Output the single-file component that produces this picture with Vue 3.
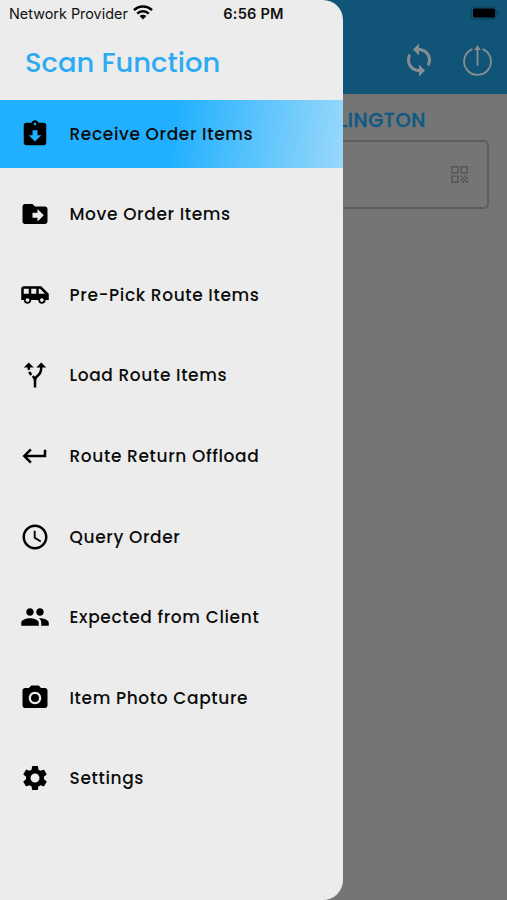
<script setup>
import {ref} from "vue";

/**
 * Entries of the scan function menu.
 *
 * label - text of the entry
 * icon  - path data on a 24x24 grid
 */
const menuItems = [
    {
        label: "Receive Order Items",
        icon: "M19 3h-4.18C14.4 1.84 13.3 1 12 1s-2.4.84-2.82 2H5c-1.1 0-2 .9-2 2v14c0 1.1.9 2 2 2h14c1.1 0 2-.9 2-2V5c0-1.1-.9-2-2-2zm-7 0c.55 0 1 .45 1 1s-.45 1-1 1-1-.45-1-1 .45-1 1-1zm0 15l-5-5h3V9h4v4h3l-5 5z"
    },
    {
        label: "Move Order Items",
        icon: "M20 6h-8l-2-2H4c-1.1 0-2 .9-2 2v12c0 1.1.9 2 2 2h16c1.1 0 2-.9 2-2V8c0-1.1-.9-2-2-2zm-6 12v-3h-4v-4h4V8l5 5-5 5z"
    },
    {
        label: "Pre-Pick Route Items",
        icon: "M17 5H3c-1.1 0-2 .89-2 2v9h2c0 1.65 1.34 3 3 3s3-1.35 3-3h5.5c0 1.65 1.34 3 3 3s3-1.35 3-3H23v-5l-6-6zM3 11V7h4v4H3zm3 6.5c-.83 0-1.5-.67-1.5-1.5s.67-1.5 1.5-1.5 1.5.67 1.5 1.5-.67 1.5-1.5 1.5zm7-6.5H9V7h4v4zm4.5 6.5c-.83 0-1.5-.67-1.5-1.5s.67-1.5 1.5-1.5 1.5.67 1.5 1.5-.67 1.5-1.5 1.5zM15 11V7h1l4 4h-5z"
    },
    {
        label: "Load Route Items",
        icon: "M9.78 11.16l-1.42 1.42c-.68-.69-1.34-1.58-1.79-2.94l1.94-.49c.32.89.77 1.5 1.27 2.01zM11 6L7 2 3 6h3.02c.02.81.08 1.54.19 2.17l1.94-.49C8.08 7.2 8.03 6.63 8.02 6H11zm10 0l-4-4-4 4h2.99c-.1 3.68-1.28 4.75-2.54 5.88-.5.44-1.01.92-1.45 1.55-.34-.49-.73-.88-1.13-1.24L9.46 13.6c.93.85 1.54 1.54 1.54 3.4v5h2v-5c0-2.02.71-2.66 1.79-3.63 1.38-1.24 3.08-2.78 3.2-7.37H21z"
    },
    {
        label: "Route Return Offload",
        icon: "M19 7v4H5.83l3.58-3.59L8 6l-6 6 6 6 1.41-1.41L5.83 13H21V7z"
    },
    {
        label: "Query Order",
        icon: "M11.99 2C6.47 2 2 6.48 2 12s4.47 10 9.99 10C17.52 22 22 17.52 22 12S17.52 2 11.99 2zM12 20c-4.42 0-8-3.58-8-8s3.58-8 8-8 8 3.58 8 8-3.58 8-8 8zM12.5 7H11v6l5.25 3.15.75-1.23-4.5-2.67z"
    },
    {
        label: "Expected from Client",
        icon: "M16 11c1.66 0 2.99-1.34 2.99-3S17.66 5 16 5c-1.66 0-3 1.34-3 3s1.34 3 3 3zm-8 0c1.66 0 2.99-1.34 2.99-3S9.66 5 8 5C6.34 5 5 6.34 5 8s1.34 3 3 3zm0 2c-2.33 0-7 1.17-7 3.5V19h14v-2.5c0-2.33-4.67-3.5-7-3.5zm8 0c-.29 0-.62.02-.97.05 1.16.84 1.97 1.97 1.97 3.45V19h6v-2.5c0-2.33-4.67-3.5-7-3.5z"
    },
    {
        label: "Item Photo Capture",
        icon: "M12 8.8a3.2 3.2 0 1 0 0 6.4 3.2 3.2 0 0 0 0-6.4zM9 2L7.17 4H4c-1.1 0-2 .9-2 2v12c0 1.1.9 2 2 2h16c1.1 0 2-.9 2-2V6c0-1.1-.9-2-2-2h-3.17L15 2H9zm3 15c-2.76 0-5-2.24-5-5s2.24-5 5-5 5 2.24 5 5-2.24 5-5 5z"
    },
    {
        label: "Settings",
        icon: "M19.14 12.94c.04-.3.06-.61.06-.94 0-.32-.02-.64-.07-.94l2.03-1.58c.18-.14.23-.41.12-.61l-1.92-3.32c-.12-.22-.37-.29-.59-.22l-2.39.96c-.5-.38-1.03-.7-1.62-.94L14.4 2.81c-.04-.24-.24-.41-.48-.41h-3.84c-.24 0-.43.17-.47.41L9.25 5.35c-.59.24-1.13.57-1.62.94L5.24 5.33c-.22-.08-.47 0-.59.22L2.74 8.87c-.12.21-.08.47.12.61l2.03 1.58c-.05.3-.09.63-.09.94s.02.64.07.94l-2.03 1.58c-.18.14-.23.41-.12.61l1.92 3.32c.12.22.37.29.59.22l2.39-.96c.5.38 1.03.7 1.62.94l.36 2.54c.05.24.24.41.48.41h3.84c.24 0 .44-.17.47-.41l.36-2.54c.59-.24 1.13-.56 1.62-.94l2.39.96c.22.08.47 0 .59-.22l1.92-3.32c.12-.22.07-.47-.12-.61l-2.01-1.58zM12 15.6c-1.98 0-3.6-1.62-3.6-3.6s1.62-3.6 3.6-3.6 3.6 1.62 3.6 3.6-1.62 3.6-3.6 3.6z"
    }
];

/** Index of the highlighted menu entry. */
const selected = ref(0);
</script>

<template>
    <div class="screen">
        <!-- Dimmed page behind the drawer -->
        <div class="page">
            <header class="toolbar">
                <svg class="sync" viewBox="0 0 24 24">
                    <path d="M12 4V1L8 5l4 4V6c3.31 0 6 2.69 6 6 0 1.01-.25 1.97-.7 2.8l1.46 1.46C19.54 15.03 20 13.57 20 12c0-4.42-3.58-8-8-8zm0 14c-3.31 0-6-2.69-6-6 0-1.01.25-1.97.7-2.8L5.24 7.74C4.46 8.97 4 10.43 4 12c0 4.42 3.58 8 8 8v3l4-4-4-4v3z"/>
                </svg>
                <svg class="power" viewBox="0 0 32 32">
                    <path d="M11 4A13 13 0 1 0 21 4M16 20V3"/>
                    <path class="tip" d="M16 .2L12.7 4.8h6.6z"/>
                </svg>
            </header>
            <div class="branch">LINGTON</div>
            <div class="scan-field">
                <svg class="qr" viewBox="0 0 18 18">
                    <path d="M0 0h8v8H0zM1.5 1.5v5h5v-5zM10 0h8v8h-8zM11.5 1.5v5h5v-5zM0 10h8v8H0zM1.5 11.5v5h5v-5zM10 10h2v2h-2zM12 12h2v2h-2zM14 10h2v2h-2zM16 12h2v2h-2zM10 14h2v2h-2zM12 16h2v2h-2zM14 14h2v2h-2zM16 16h2v2h-2z"/>
                </svg>
            </div>
        </div>

        <aside class="drawer">
            <h1>Scan Function</h1>
            <ul class="menu">
                <li v-for="(item, index) in menuItems" :key="item.label" :class="{active: index === selected}" @click="selected = index">
                    <svg viewBox="0 0 24 24"><path fill-rule="evenodd" :d="item.icon"/></svg>
                    <span>{{ item.label }}</span>
                </li>
            </ul>
        </aside>

        <!-- System status bar, lies over page and drawer -->
        <div class="status-bar">
            <span class="carrier">Network Provider</span>
            <svg class="wifi" viewBox="0 0 20 15">
                <path d="M1 5.2a12.8 12.8 0 0 1 18 0M4.2 8.6a8.2 8.2 0 0 1 11.6 0"/>
                <path class="dot" d="M10 14.5L6.6 11.1a4.8 4.8 0 0 1 6.8 0z"/>
            </svg>
            <span class="time">6:56 PM</span>
            <svg class="battery" viewBox="0 0 30 14">
                <rect class="frame" x="1" y="1" width="25" height="12" rx="3"/>
                <rect x="3" y="2.5" width="22" height="9" rx="1.5"/>
                <path class="cap" d="M27.5 5v4q1.8-.6 1.8-2t-1.8-2z"/>
            </svg>
        </div>
    </div>
</template>

<style>
body {
    margin: 0;
}
</style>

<style scoped>
.screen {
    position: relative;
    width: 507px;
    height: 900px;
    overflow: hidden;
    background: #757575;
    font-family: Poppins, Inter, "Open Sans", sans-serif;
}

.toolbar {
    display: flex;
    justify-content: flex-end;
    align-items: flex-end;
    gap: 24px;
    box-sizing: border-box;
    height: 94px;
    padding: 0 13px 16px 0;
    background: #105478;
}

.sync {
    width: 36px;
    height: 36px;
    fill: #888d8f;
}

.power {
    width: 33px;
    height: 33px;
    fill: none;
    stroke: #888d8f;
    stroke-width: 1.8;
}

.power .tip {
    fill: #888d8f;
    stroke: none;
}

.branch {
    height: 46px;
    padding-right: 81px;
    text-align: right;
    font-size: 19.5px;
    font-weight: 500;
    line-height: 53px;
    letter-spacing: 0.6px;
    color: #0f5a84;
    -webkit-text-stroke: 0.4px #0f5a84;
}

.scan-field {
    display: flex;
    justify-content: flex-end;
    align-items: center;
    box-sizing: border-box;
    height: 69px;
    margin: 0 18px;
    padding-right: 19px;
    border: 2px solid #5e5e5e;
    border-radius: 5px;
}

.qr {
    width: 17px;
    height: 17px;
    fill: #555;
    fill-rule: evenodd;
}

.drawer {
    position: absolute;
    top: 0;
    left: 0;
    width: 343px;
    height: 900px;
    background: #ececec;
    border-radius: 0 20px 20px 0;
    overflow: hidden;
}

h1 {
    height: 99.5px;
    margin: 0;
    padding-left: 25px;
    font-size: 27.4px;
    font-weight: 500;
    line-height: 125px;
    color: #2cabf3;
}

.menu {
    display: flex;
    flex-direction: column;
    gap: 12.2px;
    margin: 0;
    padding: 0;
    list-style: none;
}

.menu li {
    display: flex;
    align-items: center;
    gap: 19.5px;
    height: 68.4px;
    padding-left: 20px;
    font-size: 17px;
    font-weight: 500;
    letter-spacing: 0.62px;
    color: #0c0c0c;
    cursor: pointer;
}

.menu li.active {
    background: linear-gradient(97deg, #20b0ff 50%, #98d8fa 100%);
}

.menu svg {
    width: 30px;
    height: 30px;
    fill: #000;
}

.status-bar {
    position: absolute;
    top: 0;
    left: 0;
    display: flex;
    align-items: center;
    box-sizing: border-box;
    width: 507px;
    height: 27px;
    padding: 0 7px 0 9px;
    font-family: Inter, Roboto, sans-serif;
    font-size: 14.4px;
    color: #111;
}

.wifi {
    width: 20px;
    height: 15px;
    margin: -2px 0 0 5px;
    fill: none;
    stroke: #000;
    stroke-width: 2.5;
}

.wifi .dot {
    fill: #000;
    stroke: none;
}

.time {
    margin-left: 70.5px;
    font-size: 14.6px;
    font-weight: 600;
    letter-spacing: 0.2px;
}

.battery {
    width: 30px;
    height: 14px;
    margin: -1px 0 0 auto;
}

.battery .frame {
    fill: none;
    stroke: #0b4058;
}

.battery .cap {
    fill: #0b4058;
}
</style>
